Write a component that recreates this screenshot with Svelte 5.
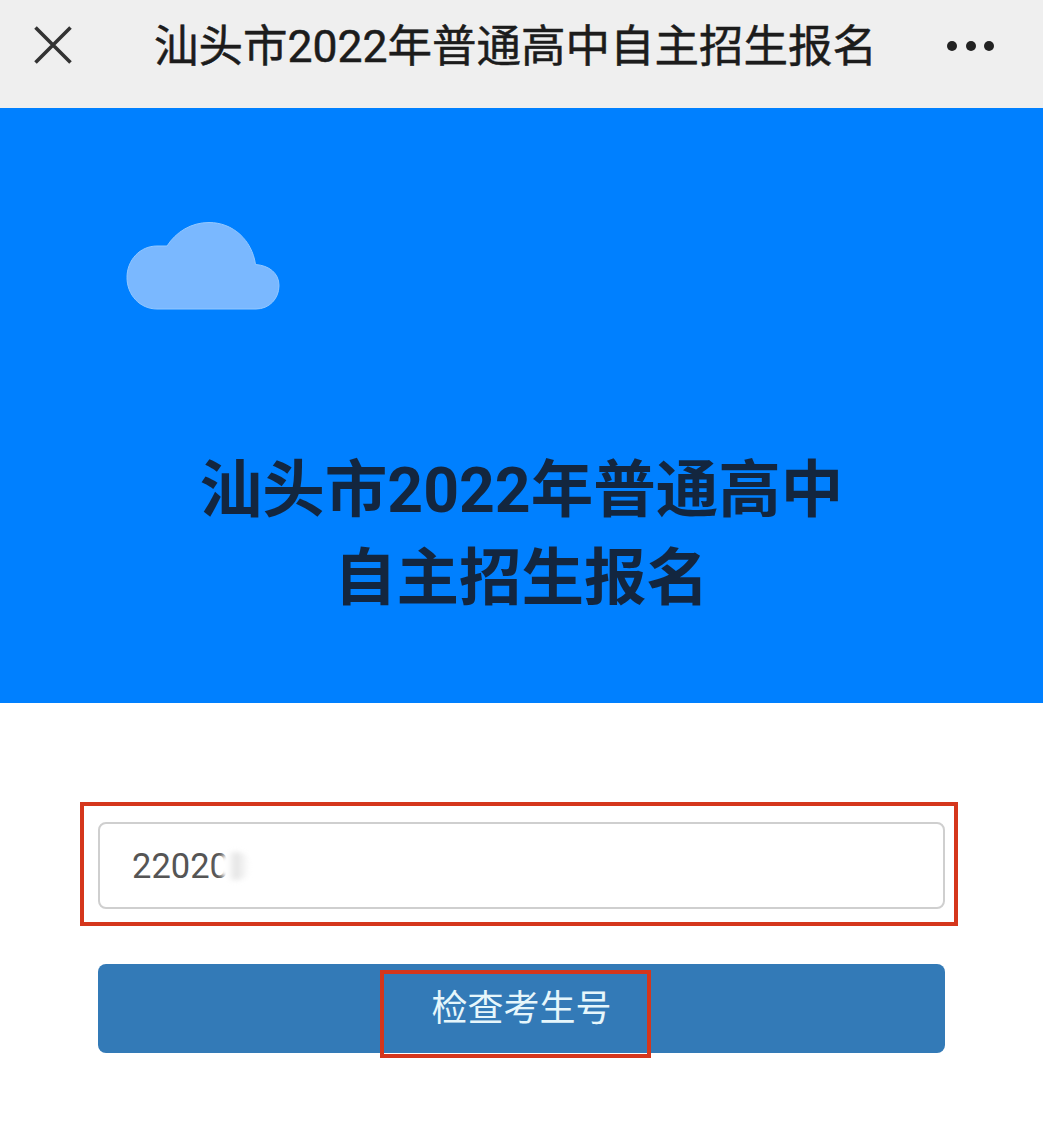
<script>
  const pageTitle = '汕头市2022年普通高中自主招生报名';
  let examNo = '22020';
</script>

<div class="page" lang="zh-CN">
  <header class="topbar">
    <svg class="close" viewBox="0 0 38 38" aria-hidden="true">
      <path d="M1.5 1.5 L36.5 36.5 M36.5 1.5 L1.5 36.5" />
    </svg>
    <h1>{pageTitle}</h1>
    <div class="more" aria-hidden="true"><i></i><i></i><i></i></div>
  </header>

  <section class="hero">
    <svg class="cloud" viewBox="127 222 152 87" aria-hidden="true">
      <path d="M157 309 C140 309 127 295 127 277.500 C127 260 140 246 157 246 L167 246 C176 232 191 222.500 209 222.500 C233 222.500 252 240 255.500 264.500 C269 265.500 279 273 279 285.500 C279 299 269 309 256 309 Z" />
    </svg>
    <h2>汕头市2022年普通高中<br />自主招生报名</h2>
  </section>

  <form class="form" on:submit|preventDefault>
    <div class="mark input-mark">
      <div class="field">
        <input type="text" bind:value={examNo} />
        <span class="smudge"></span>
      </div>
    </div>
    <div class="btn-wrap">
      <button type="submit">检查考生号</button>
      <span class="mark btn-mark"></span>
    </div>
  </form>
</div>

<style>
  :global(body) {
    margin: 0;
    background: #fff;
  }

  .page {
    width: 1043px;
    height: 1129px;
    overflow: hidden;
    font-family: Roboto, "Noto Sans CJK SC", sans-serif;
  }

  .topbar {
    height: 108px;
    box-sizing: border-box;
    background: #efefef;
    display: flex;
    align-items: center;
    padding: 0 49px 0 34px;
  }

  .close {
    width: 38px;
    height: 38px;
    margin-top: -18px;
    flex: none;
  }

  .close path {
    fill: none;
    stroke: #333;
    stroke-width: 3.6;
  }

  .topbar h1 {
    flex: 1;
    margin: -14px 0 0 12px;
    text-align: center;
    font-size: 44.500px;
    font-weight: 400;
    line-height: 60px;
    color: #1c1c1c;
    -webkit-text-stroke: 0.5px #1c1c1c;
    white-space: nowrap;
  }

  .more {
    display: flex;
    gap: 8.500px;
    margin-top: -16px;
    flex: none;
  }

  .more i {
    width: 10px;
    height: 10px;
    border-radius: 50%;
    background: #222;
  }

  .hero {
    height: 595px;
    box-sizing: border-box;
    background: #0080ff;
    padding: 114px 0 0 127px;
  }

  .cloud {
    display: block;
    width: 152px;
    height: 87px;
    overflow: visible;
  }

  .cloud path {
    fill: #7ab8ff;
    stroke: #93c8ff;
    stroke-width: 1;
  }

  .hero h2 {
    margin: 138px 0 0 -127px;
    text-align: center;
    font-size: 62.500px;
    font-weight: 700;
    line-height: 88px;
    color: #13263f;
  }

  .form {
    padding: 99px 85px 0 80px;
  }

  .mark {
    box-sizing: border-box;
    border: 4px solid #d5361c;
  }

  .input-mark {
    height: 124px;
    padding: 16px 9px 0 14px;
  }

  .field {
    position: relative;
  }

  input {
    display: block;
    width: 100%;
    height: 87px;
    box-sizing: border-box;
    border: 2px solid #cfcfcf;
    border-radius: 8px;
    background: #fff;
    padding: 0 32px;
    font: 400 34.500px Roboto, sans-serif;
    color: #555;
    outline: none;
  }

  .smudge {
    position: absolute;
    left: 119px;
    top: 30px;
    width: 36px;
    height: 28px;
    background: linear-gradient(90deg, #fff 30%, #e4e4e4 52%, #fff 90%);
    border-radius: 50%;
    filter: blur(2.500px);
  }

  .btn-wrap {
    position: relative;
    margin: 38px 0 0 18px;
  }

  button {
    display: block;
    width: 847px;
    height: 89px;
    border: 0;
    border-radius: 8px;
    background: #337ab7;
    padding: 0 0 8px;
    font: 400 36px Roboto, "Noto Sans CJK SC", sans-serif;
    color: #e6f6fb;
    cursor: pointer;
  }

  .btn-mark {
    position: absolute;
    left: 282px;
    top: 6px;
    width: 271px;
    height: 88px;
    pointer-events: none;
  }
</style>
